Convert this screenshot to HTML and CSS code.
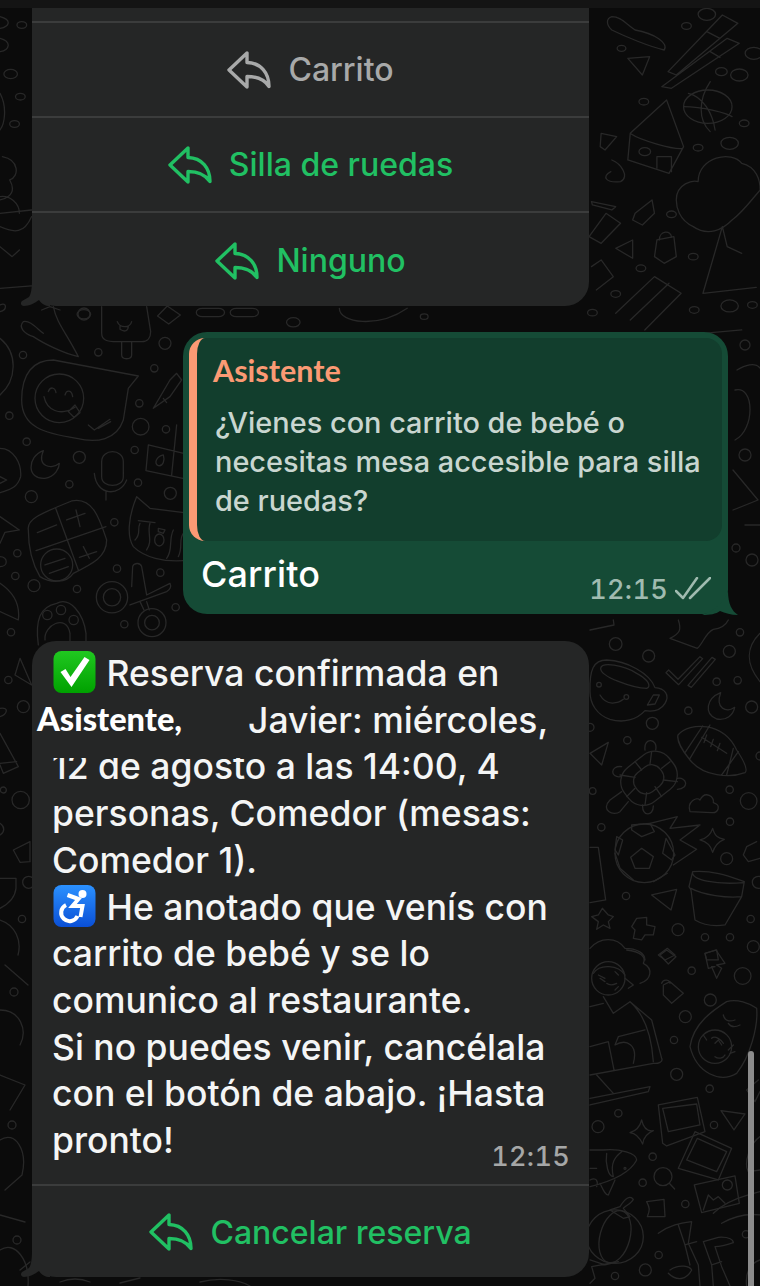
FILE: index.html
```html
<!DOCTYPE html>
<html lang="es">
  <head>
    <meta charset="UTF-8" />
    <meta name="viewport" content="width=device-width, initial-scale=1.0" />
    <title>Chat</title>
    <link rel="stylesheet" href="styles.css">
  </head>
  <body>
    <svg width="0" height="0" class="defs">
      <symbol id="reply" viewBox="0 0 44 38">
        <path d="M2 19 20 2V11.500C34 12 42 22 42 35.500 37 28 30 25.500 20 25.500V36Z" />
      </symbol>
    </svg>

    <div class="screen">
      <!-- wallpaper doodles -->
      <svg class="wallpaper" viewBox="0 0 760 1286">
        <!-- top right, coords from 2x/3x crop -->
        <g transform="scale(.4848 .3333)">
          <path d="M1378 215 1490 45 1522 70 1395 225ZM1458 95 1485 115M1365 260 1500 115 1525 130 1385 265ZM1465 155 1485 172" />
          <path d="M1262 50C1280 50 1290 70 1310 90 1350 100 1380 130 1370 150 1340 140 1290 110 1262 90 1250 75 1250 55 1262 50Z" />
          <circle cx="1460" cy="320" r="50" />
          <path d="M1410 320C1450 320 1500 340 1510 350M1465 245C1440 300 1440 360 1465 395M1420 280C1450 290 1470 340 1475 390" />
          <path d="M1300 400 1375 300 1410 440 1380 520 1295 480ZM1302 402C1320 420 1390 450 1408 445" />
          <circle cx="1330" cy="455" r="12" />
          <path d="M1355 505V470H1385V515" />
          <path d="M1395 600C1395 550 1430 540 1440 545 1440 470 1510 450 1530 490 1560 500 1568 540 1568 570 1550 600 1530 640 1510 660 1490 690 1460 710 1430 680 1400 660 1395 620 1395 600Z" />
          <path d="M1490 680 1450 880 1560 862M1490 680 1500 740 1530 760" />
          <path d="M1295 175 1340 170 1325 225Z" />
          <path d="M1240 400 1272 410 1248 450 1238 440ZM1260 515C1240 530 1250 550 1280 545 1300 530 1280 490 1262 480" />
          <path d="M1220 605 1270 620 1262 630 1222 615ZM1250 640 1280 670 1240 730 1215 710Z" />
          <path d="M1310 640 1345 600 1350 640 1325 675 1305 660Z" />
          <path d="M1355 720 1390 710 1395 770 1370 790 1350 770ZM1360 720C1360 690 1385 690 1385 712" />
          <path d="M1270 745 1305 720 1305 775Z" />
          <path d="M1220 800 1240 780 1265 830 1230 870" />
          <path d="M1270 940 1350 830 1405 880 1330 990M1300 960 1380 850" />
          <path d="M1450 1000 1530 990" />
          <circle cx="1282" cy="145" r="9" /><circle cx="1416" cy="78" r="10" /><circle cx="1458" cy="43" r="18" />
          <circle cx="1488" cy="215" r="12" /><circle cx="1525" cy="225" r="18" /><circle cx="1328" cy="305" r="10" />
          <circle cx="1535" cy="370" r="10" /><circle cx="1440" cy="443" r="10" /><circle cx="1505" cy="430" r="18" />
          <circle cx="1385" cy="643" r="10" /><circle cx="1430" cy="770" r="10" /><circle cx="1322" cy="805" r="10" />
          <circle cx="1270" cy="882" r="10" /><circle cx="1505" cy="918" r="18" /><circle cx="1552" cy="915" r="10" />
          <circle cx="1432" cy="930" r="10" /><circle cx="1222" cy="938" r="10" />
          <circle cx="1555" cy="160" r="18" /><circle cx="45" cy="75" r="10" /><circle cx="22" cy="222" r="14" />
          <circle cx="42" cy="290" r="10" /><circle cx="30" cy="372" r="10" />
          <path d="M0 50C25 60 20 80 0 85M0 115C25 125 20 150 0 155M0 280C15 320 10 370 0 390M5 470C40 480 40 530 20 540 40 590 0 600 0 600M0 590C20 585 40 610 40 640M0 640 65 630M65 650C50 700 30 700 0 680M0 740 25 770 40 750" />
          <path d="M0 865 65 858M0 915C15 905 15 930 0 935" />
        </g>

        <!-- under first bubble -->
        <g transform="scale(.4848 .3333)">
          <circle cx="173" cy="943" r="14" /><circle cx="605" cy="967" r="14" /><circle cx="875" cy="950" r="8" />
          <rect x="405" y="925" width="58" height="25" rx="12" /><rect x="475" y="925" width="58" height="25" rx="12" />
          <path d="M345 918 372 945 348 972 325 948ZM700 925C700 970 780 985 840 925" />
        </g>

        <!-- left, y 300 to 645 -->
        <g transform="translate(0 300) scale(.3333)">
          <path d="M160 20C170 70 200 100 235 170 190 160 130 130 100 110 70 100 55 80 70 65 90 60 110 85 130 100" />
          <path d="M125 30 150 20 180 30M305 20V100C305 120 320 125 350 125H425C445 125 452 110 452 95L440 20M365 125V165C365 180 395 180 395 165V125" />
          <path d="M352 65C360 85 390 85 395 65M360 78V88C375 98 385 92 385 78" />
          <path d="M0 115C55 160 50 240 0 285" />
          <path d="M65 300C65 220 100 180 160 180L415 228 385 265 370 360C350 420 290 430 230 415 130 400 65 380 65 300Z" />
          <circle cx="178" cy="295" r="73" />
          <path d="M145 275C150 260 165 260 168 278M195 285C200 268 215 270 218 290M132 290C140 330 180 350 225 322M205 335 225 315 240 338 222 352ZM265 375 283 390 330 358M295 385 332 365" />
          <circle cx="69" cy="165" r="11" /><circle cx="295" cy="157" r="11" /><circle cx="495" cy="130" r="18" /><circle cx="463" cy="205" r="11" />
          <circle cx="252" cy="42" r="18" /><circle cx="418" cy="310" r="11" /><circle cx="28" cy="347" r="11" /><circle cx="422" cy="380" r="25" />
          <circle cx="498" cy="388" r="11" /><circle cx="80" cy="425" r="11" /><circle cx="404" cy="450" r="11" /><circle cx="238" cy="472" r="18" />
          <circle cx="208" cy="553" r="11" /><circle cx="414" cy="548" r="11" /><circle cx="94" cy="590" r="18" /><circle cx="511" cy="580" r="18" />
          <circle cx="343" cy="667" r="11" /><circle cx="52" cy="760" r="11" /><circle cx="46" cy="828" r="11" /><circle cx="102" cy="857" r="18" />
          <circle cx="351" cy="806" r="11" /><circle cx="481" cy="818" r="11" /><circle cx="231" cy="867" r="11" /><circle cx="527" cy="922" r="11" />
          <circle cx="373" cy="973" r="11" /><circle cx="33" cy="997" r="11" />
          <path d="M130 452C80 470 80 540 135 535 165 530 178 505 178 490 155 510 110 500 130 452Z" />
          <path d="M305 485C305 445 370 445 370 485V530C370 565 305 565 305 530ZM283 520C290 590 360 590 380 540M318 575V600" />
          <path d="M0 445C40 445 65 490 62 530 50 570 20 570 0 578M0 530 20 540 0 550" />
          <path d="M0 650 58 690 15 697 0 730M0 770C25 770 25 800 0 800" />
          <path d="M85 690C80 660 110 645 215 603 280 590 300 660 320 720 320 770 280 790 220 820 200 850 150 850 120 830 90 780 85 720 85 690ZM167 625 235 810M108 752 318 680M112 698 170 675M200 660 255 640M228 630 240 680M250 740 268 775M238 772 290 755" />
          <circle cx="170" cy="795" r="48" />
          <path d="M135 795 195 775M148 820 205 800" />
          <path d="M0 850C45 880 60 920 55 960L0 935" />
          <path d="M115 1035C105 960 120 920 170 910 210 890 250 940 258 1000V1035" />
          <circle cx="142" cy="945" r="14" /><circle cx="183" cy="930" r="14" /><circle cx="221" cy="960" r="14" />
          <path d="M135 1020C130 975 200 940 210 1000V1030" />
          <path d="M460 325 510 240 530 220 545 240 510 290ZM490 295 500 308" />
          <path d="M445 435 570 465M438 512 570 540M445 435 438 512M530 375 515 525" />
          <path d="M490 465C470 470 460 490 475 497 490 500 495 480 490 465Z" />
          <path d="M410 590C385 650 380 710 400 740 430 770 490 790 570 780M410 590 450 625 570 640" />
          <path d="M415 662 465 668M405 720C425 700 410 690 420 670M440 750C460 720 440 700 450 670M500 775C520 750 505 720 520 690M535 770C550 740 535 720 550 700" />
          <ellipse cx="478" cy="720" rx="14" ry="18" />
          <path d="M475 685 495 690 490 700 475 695Z" />
          <circle cx="336" cy="892" r="47" /><circle cx="336" cy="892" r="26" />
          <path d="M395 860 398 800C400 790 420 785 425 800L440 885 510 850C515 860 510 870 500 875L390 915" />
          <circle cx="456" cy="968" r="42" /><circle cx="456" cy="968" r="22" />
          <path d="M420 905 432 930M440 905 448 930" />
        </g>

        <!-- right of green bubble -->
        <path d="M737 370C745 365 755 362 760 368M735 390C755 385 755 430 735 440M733 470 758 500 733 510M745 525H760" />
        <circle cx="745" cy="455" r="6" /><circle cx="752" cy="560" r="6" /><circle cx="736" cy="548" r="4" /><circle cx="745" cy="345" r="5" />

        <!-- left under bubble row -->
        <g transform="translate(0 635) scale(.3333)">
          <circle cx="25" cy="135" r="11" /><circle cx="70" cy="215" r="18" />
          <path d="M0 220C30 215 20 240 0 245M0 295 55 395 10 415 0 390M0 385 50 380" />
          <circle cx="62" cy="495" r="26" /><circle cx="10" cy="465" r="9" />
          <path d="M0 565C15 575 15 590 0 600M40 645 90 620V680L60 682ZM0 730H48V760C45 790 20 810 0 820" />
          <circle cx="86" cy="742" r="18" /><circle cx="66" cy="852" r="11" />
          <path d="M60 70 95 150 45 120Z" />
        </g>
        <path d="M0 920C15 925 22 940 18 955M5 965 28 985M0 1010C20 1010 28 1030 20 1045M0 1075 25 1085 10 1110M0 1140C15 1130 28 1150 22 1175L5 1190M0 1215 25 1222M0 1250C15 1240 30 1260 28 1286" />
        <circle cx="14" cy="992" r="4" /><circle cx="12" cy="1125" r="4" /><circle cx="17" cy="1240" r="4" />
        <path d="M20 1270 30 1262M60 1282C70 1278 80 1278 90 1282M120 1283 140 1278M200 1282C220 1277 240 1280 250 1286" />

        <!-- right, y 620 to 950 -->
        <g transform="translate(590 620) scale(.3333)">
          <path d="M0 30 72 15 70 0M240 55 322 85C340 70 345 40 370 28 400 25 410 10 415 0M265 0C275 30 270 40 240 55" />
          <path d="M0 215C-2 150 10 120 50 120 110 122 180 160 195 203 225 205 240 225 225 250 210 275 185 275 165 272 140 300 100 310 60 298 20 285 0 250 0 215Z" />
          <path d="M32 145C35 125 100 135 140 160 175 178 185 200 170 205 130 205 30 170 32 145ZM172 255 190 225 208 225 195 252ZM30 225C50 260 85 250 100 238" />
          <circle cx="27" cy="194" r="7" /><circle cx="109" cy="231" r="7" />
          <path d="M228 158 236 150 264 178 330 110 338 116 266 194ZM294 196 366 112 376 118 304 202Z" />
          <path d="M392 218C350 235 340 280 380 297 410 302 430 285 434 262 410 280 375 265 392 218Z" />
          <path d="M510 40C470 80 465 130 510 185" />
          <circle cx="77" cy="72" r="19" /><circle cx="176" cy="108" r="18" /><circle cx="418" cy="94" r="18" /><circle cx="450" cy="37" r="11" />
          <circle cx="380" cy="185" r="11" /><circle cx="443" cy="181" r="11" /><circle cx="295" cy="272" r="11" /><circle cx="485" cy="261" r="18" />
          <circle cx="187" cy="310" r="18" /><circle cx="112" cy="361" r="11" /><circle cx="419" cy="509" r="11" /><circle cx="476" cy="543" r="25" />
          <circle cx="420" cy="605" r="11" /><circle cx="34" cy="622" r="11" /><circle cx="410" cy="716" r="18" /><circle cx="108" cy="828" r="11" />
          <circle cx="264" cy="929" r="18" /><circle cx="345" cy="952" r="11" /><circle cx="420" cy="952" r="11" /><circle cx="482" cy="897" r="11" />
          <circle cx="490" cy="980" r="18" /><circle cx="505" cy="787" r="18" /><circle cx="8" cy="513" r="10" /><circle cx="510" cy="408" r="12" /><circle cx="0" cy="322" r="12" />
          <path d="M264 345C300 305 400 305 440 390 460 420 475 450 465 458 420 475 340 470 300 420 275 390 260 360 264 345ZM338 318 285 398M360 315 300 415M445 395 395 465M430 385 410 465M335 352 410 400M350 345 342 368M370 358 362 380M390 370 382 392" />
          <path d="M0 400 55 367 35 435 0 400Z" />
          <rect x="92" y="410" width="170" height="130" rx="55" transform="rotate(-38 177 475)" />
          <rect x="130" y="442" width="92" height="72" rx="32" transform="rotate(-38 176 478)" />
          <path d="M135 425 155 450M185 395 180 432M240 425 215 445M262 485 220 480M215 530 195 500M165 555 170 518M110 530 135 505M90 465 135 472" />
          <path d="M165 390C160 350 205 355 197 390M262 475C290 470 300 505 262 508M95 440C60 435 60 475 92 470M158 555C155 590 190 590 190 558M95 515 60 540C30 570 70 590 90 575L115 545" />
          <path d="M300 575C290 545 320 530 330 540 345 510 375 530 370 548 395 555 385 580 365 578Z" />
          <circle cx="163" cy="700" r="88" />
          <path d="M125 615 180 610 193 635 155 650 125 630ZM155 685 190 710 178 745 135 745 122 712ZM228 655 255 705 245 720 218 700ZM80 650 98 660 85 705 75 690ZM90 745 130 780M190 785 232 760M75 700 90 745" />
          <path d="M180 610 262 590 240 625 330 615 270 660 320 688 250 735" />
          <path d="M368 625C375 650 385 655 403 658 385 665 375 675 368 697 362 675 350 665 330 660 350 655 362 645 368 625Z" />
          <path d="M0 682H25L47 840 0 848" />
          <path d="M500 665 470 680 460 705 475 725 510 715" />
          <path d="M185 825 260 808 243 870ZM308 755C370 750 420 770 463 785L455 830 405 915C370 920 340 915 315 900L303 810 297 800ZM308 755C300 780 380 795 460 788M303 805C340 825 410 835 455 830" />
          <path d="M37 865 55 885 70 890 55 905 60 925 40 915 20 928 25 905 5 890 25 885Z" />
          <path d="M140 895 170 892 170 915 195 920 190 945 165 945 155 960 130 955 135 930 125 920Z" />
          <path d="M0 985C30 950 80 950 105 985 140 985 165 1000 165 1020M232 985 255 1005 225 1020 205 1005ZM345 1000 380 990 385 1020H350Z" />
        </g>

        <!-- right, y 950 to 1286 -->
        <g transform="translate(590 950) scale(.3333)">
          <path d="M210 15 230 0 258 20 235 42ZM345 10 378 0 405 40 380 45 395 55 380 85 365 50H375L355 55Z" />
          <path d="M110 0C150 5 170 20 160 40 190 55 185 90 150 100M105 85 130 105 115 115" />
          <circle cx="55" cy="85" r="50" />
          <path d="M10 70C30 40 85 45 105 75M25 75 45 85M75 65 85 75M30 85 45 95M50 100C60 108 70 105 80 100M75 120 85 110" />
          <path d="M40 140 70 190 120 155 185 210 215 325C220 335 205 342 190 340L0 375M0 170 40 160M120 155C165 195 185 260 190 335M85 260 165 240M0 290 55 275 72 360M85 260 75 285C110 265 145 285 130 340" />
          <path d="M20 375 70 430M0 465 175 425 180 410 0 445" />
          <path d="M220 105 240 95 280 130 245 160 220 135ZM215 100C220 85 240 90 240 100" />
          <path d="M300 290C310 220 370 180 410 155 440 145 480 160 500 175 505 230 480 320 440 370 390 400 320 370 300 290Z" />
          <circle cx="375" cy="290" r="50" />
          <path d="M340 255 350 270M365 265C375 255 395 270 400 280M375 320C385 328 400 325 405 315M415 300 430 285M420 310 435 305M400 195C405 215 420 215 435 210M415 220C425 235 440 230 450 225M375 280 385 270 395 285" />
          <circle cx="305" cy="62" r="11" /><circle cx="458" cy="78" r="25" /><circle cx="361" cy="150" r="18" />
          <circle cx="286" cy="200" r="18" /><circle cx="252" cy="270" r="11" /><circle cx="260" cy="373" r="18" />
          <circle cx="359" cy="416" r="11" /><circle cx="85" cy="490" r="11" /><circle cx="24" cy="530" r="18" />
          <circle cx="372" cy="525" r="11" /><circle cx="188" cy="620" r="11" /><circle cx="158" cy="698" r="11" />
          <circle cx="286" cy="762" r="11" /><circle cx="206" cy="915" r="11" /><circle cx="166" cy="960" r="18" />
          <circle cx="75" cy="978" r="11" /><circle cx="468" cy="853" r="11" />
          <path d="M205 465 322 442 345 545 230 588 218 580ZM218 475 320 462 330 525 235 545Z" />
          <path d="M315 545 425 595 385 690 265 655ZM322 565 410 605 380 665 290 630Z" />
          <path d="M393 482 465 492 432 540Z" />
          <path d="M155 510C160 535 170 545 190 542 170 550 160 565 158 582 150 565 140 550 120 548 140 542 150 530 155 510Z" />
          <path d="M0 600 40 600C90 595 140 610 140 630 120 670 60 695 0 710M30 700C40 720 45 735 55 735L75 690M95 605C75 620 60 640 70 680 55 680 45 640 50 610M0 655H20M0 690C20 680 25 695 20 710" />
          <circle cx="105" cy="655" r="3" />
          <circle cx="219" cy="680" r="27" />
          <path d="M238 700 254 717" />
          <path d="M313 705 435 678 448 760 335 788ZM340 780 355 735 370 750 385 740 405 760" />
          <circle cx="412" cy="705" r="15" />
          <path d="M170 755 222 748 225 800 172 800C180 780 180 775 170 755Z" />
          <path d="M90 770C105 745 120 735 130 748 125 760 110 765 100 775L120 800 100 805 60 780 90 770Z" />
          <ellipse cx="75" cy="860" rx="85" ry="80" />
          <ellipse cx="75" cy="860" rx="45" ry="80" transform="rotate(15 75 860)" />
          <path d="M0 930 45 945 85 935 5 950 15 985 0 1000" />
          <path d="M205 850C240 825 270 820 305 815L295 880 325 945 330 1008M265 825 285 885 300 945M285 885 320 875M240 960C270 940 300 950 305 960 290 990 260 995 235 970M340 875 385 862C420 860 430 870 430 878 410 885 395 890 375 890L395 950 420 1008M340 875 365 945 370 1008M365 945 395 935" />
          <path d="M370 790C400 760 440 745 475 735L510 725M395 820C430 800 470 790 510 795" />
          <path d="M505 390 470 420 495 455 510 425M510 560C480 580 460 640 475 665L510 660M510 930C480 940 465 970 470 1008" />
        </g>
      </svg>

      <div class="top-bar"></div>

      <main class="chat">
        <section class="bubble incoming options">
          <div class="clipped-top"></div>
          <button class="reply-btn used">
            <svg class="reply-icon"><use href="#reply" /></svg>Carrito
          </button>
          <button class="reply-btn">
            <svg class="reply-icon"><use href="#reply" /></svg>Silla de ruedas
          </button>
          <button class="reply-btn last">
            <svg class="reply-icon"><use href="#reply" /></svg>Ninguno
          </button>
          <svg class="tail tail-left" viewBox="0 0 30 26"><path d="M12 0C12 8 11 14 9 17L2 21C0 23 1 26 4 26 9 26 15 23 19 20 22 24 25 26 30 26V0Z" /></svg>
        </section>

        <section class="bubble outgoing">
          <div class="quote">
            <div class="quote-author">Asistente</div>
            <p class="quote-text">¿Vienes con carrito de bebé o necesitas mesa accesible para silla de ruedas?</p>
          </div>
          <p class="out-text">Carrito</p>
          <div class="meta meta-out">
            <span>12:15</span>
            <svg class="ticks" viewBox="0 0 36 26"><path d="M1 14 8 21 22 1M15 21 35 1" /></svg>
          </div>
          <svg class="tail tail-right" viewBox="0 0 36 24"><path d="M26 0C26 13 30 20 36 24 29 24 23 22 18 20 14 23 8 24 0 24 12 20 22 12 26 0Z" /></svg>
        </section>

        <section class="bubble incoming confirm">
          <p class="msg-text">
            <svg class="emoji" viewBox="0 0 42 42" role="img" aria-label="✅">
              <defs><linearGradient id="g1" x1="0" y1="0" x2="0" y2="1"><stop offset="0" stop-color="#20c820" /><stop offset="1" stop-color="#00a100" /></linearGradient></defs>
              <rect width="42" height="42" rx="8" fill="url(#g1)" />
              <path d="M7 21 12 18 17 26 31 6 36 9 18 36Z" fill="#fff" />
            </svg>
            Reserva confirmada en <span class="name-gap"><span class="name-over">Asistente,</span></span>Javier: miércoles, 12 de agosto a las 14:00, 4 personas, Comedor (mesas: Comedor 1).<br>
            <svg class="emoji" viewBox="0 0 42 42" role="img" aria-label="♿">
              <defs><linearGradient id="g2" x1="0" y1="0" x2="0" y2="1"><stop offset="0" stop-color="#2b91ff" /><stop offset="1" stop-color="#0a4fd6" /></linearGradient></defs>
              <rect width="42" height="42" rx="8" fill="url(#g2)" />
              <circle cx="29" cy="9" r="4" fill="#fff" />
              <path d="M14 10 25 14 19 21H29L27 32M12.500 20A8.500 8.500 0 1 0 24 31" fill="none" stroke="#fff" stroke-width="4" />
            </svg>
            He anotado que venís con carrito de bebé y se lo comunico al restaurante.<br>
            Si no puedes venir, cancélala con el botón de abajo. ¡Hasta pronto!
          </p>
          <div class="meta meta-in">12:15</div>
          <button class="reply-btn last">
            <svg class="reply-icon"><use href="#reply" /></svg>Cancelar reserva
          </button>
          <svg class="tail tail-left" viewBox="0 0 30 26"><path d="M12 0C12 8 11 14 9 17L2 21C0 23 1 26 4 26 9 26 15 23 19 20 22 24 25 26 30 26V0Z" /></svg>
        </section>
      </main>

      <div class="scroll-thumb"></div>
    </div>
  </body>
</html>
```

FILE: styles.css
```css
* {
  box-sizing: border-box;
}
html,
body {
  margin: 0;
  height: 100%;
}
body {
  background: #0b0b0b;
  font-family: Inter, "Liberation Sans", sans-serif;
  overflow: hidden;
}
.defs {
  position: absolute;
}
.screen {
  position: relative;
  width: 760px;
  height: 1286px;
  overflow: hidden;
  background: #0b0b0b;
}
.wallpaper {
  position: absolute;
  left: 0;
  top: 0;
  width: 760px;
  height: 1286px;
  fill: none;
  stroke: #282828;
  stroke-linecap: round;
  stroke-linejoin: round;
}
.wallpaper * {
  vector-effect: non-scaling-stroke;
  stroke-width: 1.300px;
}
.top-bar {
  position: relative;
  height: 8px;
  background: #141414;
}
.chat {
  position: relative;
  display: flex;
  flex-direction: column;
}
.bubble {
  position: relative;
}
.incoming {
  width: 557px;
  margin-left: 32px;
  background: #252626;
  color: #f4f5f5;
}
.options {
  border-radius: 0 0 24px 24px;
}
.clipped-top {
  height: 13px;
}
.confirm {
  margin-top: 27px;
  border-radius: 24px;
}
.reply-btn {
  display: flex;
  align-items: center;
  justify-content: center;
  gap: 17px;
  width: 100%;
  height: 95px;
  padding: 0;
  background: none;
  border: 0;
  border-top: 2px solid #3b3c3c;
  color: #21c063;
  font-family: inherit;
  font-size: 32px;
  font-weight: 500;
}
.options .last {
  padding-top: 2px;
}
.confirm .last {
  height: 93px;
  padding-top: 2px;
}
.reply-btn.used {
  color: #a8a9a9;
}
.reply-icon {
  width: 44px;
  height: 38px;
  fill: none;
  stroke: currentColor;
  stroke-width: 3.400;
  stroke-linejoin: round;
  stroke-linecap: round;
}
.tail {
  position: absolute;
  bottom: 0;
}
.tail-left {
  left: -12px;
  width: 30px;
  height: 26px;
  fill: #252626;
}
.tail-right {
  right: -10px;
  bottom: -1px;
  width: 36px;
  height: 24px;
  fill: #154b36;
}
.outgoing {
  width: 545px;
  height: 282px;
  margin: 26px 0 0 183px;
  padding: 6px;
  border-radius: 24px;
  background: #154b36;
  color: #fff;
}
.quote {
  height: 203px;
  padding: 14px 10px 0 18px;
  border-left: 8px solid #fb9a74;
  border-radius: 16px;
  background: #123e2d;
}
.quote-author {
  margin-left: -2px;
  color: #fb9a74;
  font-family: Lato, sans-serif;
  font-size: 30.500px;
  font-weight: 700;
  line-height: 36px;
}
.quote-text {
  margin: 15px 0 0;
  color: #c9d6d0;
  font-size: 28.900px;
  font-weight: 450;
  line-height: 39px;
}
.out-text {
  margin: 8px 0 0 12px;
  font-size: 36px;
  font-weight: 450;
  letter-spacing: .1px;
  line-height: 50px;
}
.meta {
  position: absolute;
  color: #a6a7a7;
  font-size: 27px;
  font-weight: 450;
  font-variant-numeric: tabular-nums;
  letter-spacing: .3px;
  line-height: 32px;
}
.meta-out {
  right: 17px;
  bottom: 8px;
  display: flex;
  align-items: center;
  gap: 7px;
  color: #a0bbb0;
}
.ticks {
  width: 36px;
  height: 26px;
  fill: none;
  stroke: currentColor;
  stroke-width: 2.500;
  stroke-linecap: round;
  stroke-linejoin: round;
}
.msg-text {
  margin: 0;
  padding: 10px 20px 19px 20px;
  font-size: 35.500px;
  font-weight: 450;
  line-height: 46.700px;
}
.emoji {
  width: 43px;
  height: 42px;
  margin: 0 1px;
  vertical-align: -7px;
}
.name-gap {
  position: relative;
  display: inline-block;
  width: 196px;
  height: 1px;
}
.name-over {
  position: absolute;
  left: -15px;
  top: -30px;
  padding-bottom: 22px;
  width: 210px;
  background: #252626;
  color: #fff;
  font-family: Lato, sans-serif;
  font-size: 32.500px;
  font-weight: 900;
  line-height: 34px;
  white-space: nowrap;
}
.meta-in {
  right: 19px;
  top: 500px;
}
.scroll-thumb {
  position: absolute;
  left: 748px;
  top: 1051px;
  width: 6px;
  height: 240px;
  border-radius: 3px;
  background: #8c8c8c;
}
```
